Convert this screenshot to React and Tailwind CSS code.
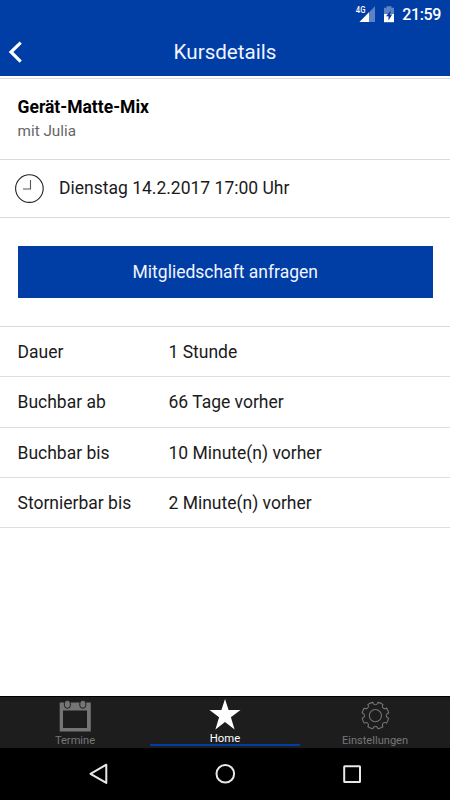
import React from "react";

const details = [
  { label: "Dauer", value: "1 Stunde", row: "h-[50px] pt-[2px]" },
  { label: "Buchbar ab", value: "66 Tage vorher", row: "h-[51px] pt-px" },
  { label: "Buchbar bis", value: "10 Minute(n) vorher", row: "h-[50px] pt-[2px]" },
  { label: "Stornierbar bis", value: "2 Minute(n) vorher", row: "h-[50px] pt-[2px]" },
];

const toothAngles = [22.5, 67.5, 112.5, 157.5, 202.5, 247.5, 292.5, 337.5];

function StatusBar() {
  return (
    <div className="flex h-7 items-center justify-end pr-[9px] text-white">
      <svg width="20" height="18" viewBox="0 0 20 18" className="mr-[8px]">
        <path d="M20 1.3V17H4.5Z" fill="#5c83c5" />
        <path d="M14 7.3V17H4.5Z" fill="#fff" />
        <rect x="0" y="0" width="10.6" height="9.2" fill="#003da5" />
        <text x="0.8" y="8.2" fill="#fff" fontFamily="Roboto" fontSize="8.6" fontWeight="500" textLength="9.6" lengthAdjust="spacingAndGlyphs">4G</text>
      </svg>
      <svg width="12" height="18" viewBox="0 0 12 18" className="mr-[7px]">
        <path d="M3.5 1.2H8.5V2.7H11V9H1V2.7H3.5Z" fill="#5c83c5" />
        <path d="M1 9H11V17.2H1Z" fill="#fff" />
        <path d="M8 5.3L3 11.2H5.5V15.5L9.2 9.6H7Z" fill="#003da5" />
      </svg>
      <span className="pt-px text-[16px] leading-7 font-medium tracking-[-0.35px]">21:59</span>
    </div>
  );
}

function Clock() {
  return (
    <svg width="30" height="30" viewBox="0 0 30 30" fill="none">
      <circle cx="15.4" cy="14.6" r="13.8" stroke="#222" strokeWidth="1.1" />
      <path d="M16.5 6V15H9" stroke="#555" strokeWidth="1.1" />
    </svg>
  );
}

function Calendar() {
  return (
    <svg width="32" height="32" viewBox="0 0 32 32">
      <path d="M.7 2.5H31.8V31.5H.7ZM4 10.5V27.9H28V10.5Z" fill="#757575" fillRule="evenodd" />
      <rect x="5.4" y="0.3" width="6" height="8" rx="3" fill="#757575" stroke="#1d1d1d" strokeWidth="1" />
      <rect x="20.8" y="0.3" width="6" height="8" rx="3" fill="#757575" stroke="#1d1d1d" strokeWidth="1" />
    </svg>
  );
}

function Gear() {
  return (
    <svg width="30" height="30" viewBox="-15.4 -14.6 30 30" fill="none" stroke="#757575" strokeWidth="1.1">
      {toothAngles.map((a) => (
        <path
          key={a}
          transform={`rotate(${a})`}
          d="M-4.13 -9.98C-3.1 -10.5 -2.7 -11.2 -2.7 -12.1L-2.6 -13.2Q0 -13.7 2.6 -13.2L2.7 -12.1C2.7 -11.2 3.1 -10.5 4.13 -9.98"
        />
      ))}
      <circle r="6.1" />
    </svg>
  );
}

export default function App() {
  return (
    <div className="flex h-[800px] w-[450px] flex-col overflow-hidden bg-white font-[Roboto,sans-serif] text-[#1b1b1b]">
      <header className="h-[76px] shrink-0 bg-[#003da5]">
        <StatusBar />
        <div className="grid h-[48px] grid-cols-[60px_1fr_60px] items-center">
          <svg width="30" height="30" viewBox="0 0 30 30" fill="none" className="mt-[-1px]">
            <path d="M20.7 5.6L11 15L20.7 24.6" stroke="#fff" strokeWidth="3.2" />
          </svg>
          <h1 className="text-center text-[20.6px] leading-[46px] text-[#f0f4ff]">Kursdetails</h1>
        </div>
      </header>

      <main className="flex flex-1 flex-col pt-[2px]">
        <section className="h-[82px] border-y border-[#dadada] pt-[16px] pl-[17.5px]">
          <h2 className="text-[17.5px] leading-6 font-bold text-black">Gerät-Matte-Mix</h2>
          <p className="text-[15.3px] leading-[25px] text-[#666]">mit Julia</p>
        </section>
        <section className="flex h-[58px] items-center border-b border-[#dadada] pl-[14px] text-[17.5px]">
          <Clock />
          <span className="ml-[15px]">Dienstag 14.2.2017 17:00 Uhr</span>
        </section>
        <section className="h-[109px] border-b border-[#dadada] pt-7 pr-[17px] pl-[17.5px]">
          <button className="h-[51.5px] w-full bg-[#003da5] text-[17.5px] text-[#f2f5ff]">Mitgliedschaft anfragen</button>
        </section>
        <dl className="text-[17.5px]">
          {details.map((d) => (
            <div key={d.label} className={`grid grid-cols-[151px_1fr] items-center border-b border-[#dedede] pl-[17.5px] ${d.row}`}>
              <dt>{d.label}</dt>
              <dd>{d.value}</dd>
            </div>
          ))}
        </dl>
      </main>

      <nav className="grid h-[52px] shrink-0 grid-cols-3 border-t border-black bg-[#1d1d1d] text-[11.1px] leading-[14px] text-[#777]">
        <div className="flex flex-col items-center pt-[3px]">
          <Calendar />
          <span className="mt-[2px]">Termine</span>
        </div>
        <div className="flex h-[49px] flex-col items-center border-b-2 border-[#003da5] pt-[2px] text-white">
          <svg width="32" height="32" viewBox="0 0 32 32" fill="#fff" className="shrink-0">
            <path d="M16 0L19.6 11.1H31.5L21.9 18.2L25.6 30.5L16 23L6.4 30.5L10.1 18.2L.5 11.1H12.4Z" />
          </svg>
          <span className="mt-px text-[11.3px]">Home</span>
        </div>
        <div className="flex flex-col items-center pt-[4px]">
          <Gear />
          <span className="mt-[3px]">Einstellungen</span>
        </div>
      </nav>

      <footer className="flex h-[52px] shrink-0 items-center bg-black">
        <svg width="450" height="52" viewBox="0 0 450 52" fill="none" stroke="#e8e8e8" strokeWidth="2">
          <path d="M106.3 16.7V34.9L90.5 25.8Z" strokeLinejoin="round" />
          <circle cx="225.3" cy="25.8" r="8.8" />
          <rect x="344.2" y="18.2" width="15.8" height="15.8" rx="0.5" />
        </svg>
      </footer>
    </div>
  );
}
